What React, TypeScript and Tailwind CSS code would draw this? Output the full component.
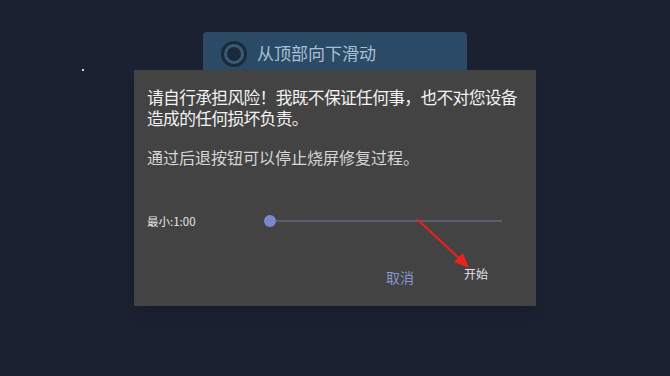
export default function App() {
  return (
    <div
      className="relative h-[376px] w-[670px] overflow-hidden bg-[#1b2130]"
      style={{ fontFamily: '"Noto Sans CJK SC", "Noto Sans", sans-serif' }}
    >
      <span className="absolute left-[82px] top-[69px] h-[2px] w-[2px] bg-[#cfd6e0]" />

      {/* card behind the dialog */}
      <div className="ml-[203px] mt-[32px] flex h-[70px] w-[264px] items-start gap-[10px] rounded-[4px] bg-[#2b4a66] pl-[18px] pt-[9px]">
        <div className="flex h-[26px] w-[26px] items-center justify-center rounded-full border-[3px] border-[#1b2a3a] bg-[#3d5a75]">
          <div className="h-[14px] w-[14px] rounded-full bg-[#1b2a3a]" />
        </div>
        <span className="text-[17px] leading-[24px] text-[#a8c0d6]">从顶部向下滑动</span>
      </div>

      {/* dialog */}
      <div className="absolute left-[134px] top-[70px] flex h-[236px] w-[402px] flex-col bg-[#434343] pl-[13px] pr-[6px] pt-[17px] shadow-lg">
        <p className="whitespace-nowrap text-[16.8px] leading-[21px] tracking-[-0.7px] text-[#f2f2f2]">
          请自行承担风险！我既不保证任何事，也不对您设备
          <br />
          造成的任何损坏负责。
        </p>
        <p className="mt-[18px] text-[16px] leading-[21px] text-[#d6d6d6]">
          通过后退按钮可以停止烧屏修复过程。
        </p>

        <div className="mt-[46px] flex items-center">
          <span className="w-[117px] text-[11.5px] leading-[14px] text-[#e6e6e6]">最小:1:00</span>
          <div className="relative flex h-[14px] w-[238px] items-center">
            <div className="h-[2px] w-full bg-[#5b5e68]" />
            <div className="absolute left-0 top-[1px] h-[12px] w-[12px] rounded-full bg-[#7d87cb]" />
          </div>
        </div>

        <div className="mt-[38px] flex items-start justify-end">
          <span className="mr-[50px] mt-[2px] text-[14px] leading-[18px] text-[#8b95c9]">取消</span>
          <span className="mr-[42px] text-[12px] leading-[16px] text-[#e2e2ea]">开始</span>
        </div>
      </div>

      {/* red annotation arrow */}
      <svg className="absolute left-0 top-0" width="670" height="376" viewBox="0 0 670 376">
        <line x1="418" y1="220" x2="462" y2="261" stroke="#e8221c" strokeWidth="2.2" strokeLinecap="round" />
        <polygon points="469,268 454,262 463,253" fill="#e8221c" />
      </svg>
    </div>
  );
}
